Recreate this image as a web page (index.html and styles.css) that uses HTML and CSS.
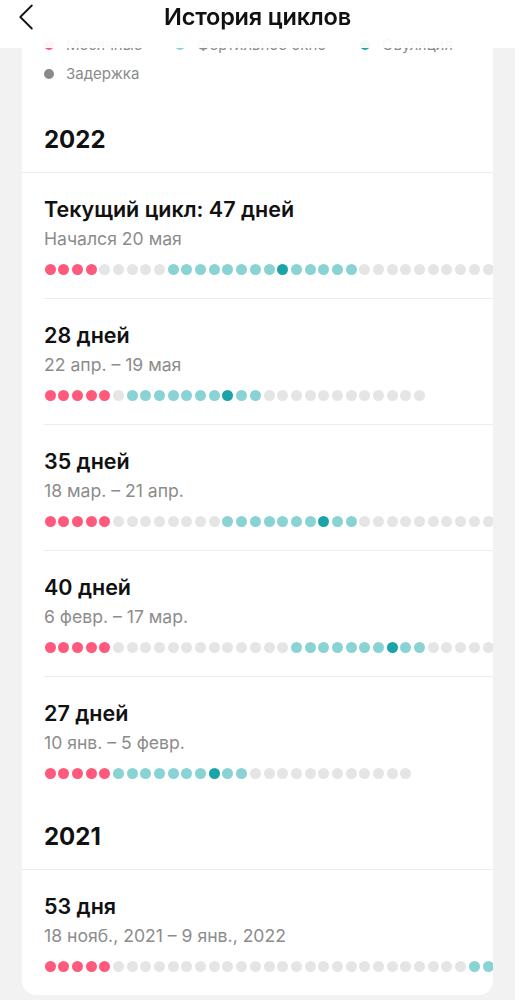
FILE: index.html
```html
<!DOCTYPE html>
<html>
<head lang="ru">
    <meta charset="UTF-8">
    <title>История циклов</title>
    <link rel="stylesheet" href="styles.css">
</head>
<body>
    <header class="topbar">
        <svg class="back" width="16" height="26" viewBox="0 0 16 26">
            <path d="M13.8 1.5 L2.3 13 L13.8 24.5" fill="none" stroke="#111" stroke-width="1.8" stroke-linecap="round" stroke-linejoin="round"/>
        </svg>
        <h1 class="title">История циклов</h1>
        <span></span>
    </header>

    <main class="page">
        <section class="card">
            <div class="legend">
                <div class="legend-row">
                    <span class="legend-item"><i class="mark period"></i>Месячные</span>
                    <span class="legend-item"><i class="mark fertile"></i>Фертильное окно</span>
                    <span class="legend-item"><i class="mark ovulation"></i>Овуляция</span>
                </div>
                <div class="legend-row">
                    <span class="legend-item"><i class="mark delay"></i>Задержка</span>
                </div>
            </div>

            <div class="group">
                <div class="year">2022</div>
                <div class="cycle">
                    <div class="cycle-title">Текущий цикл: 47 дней</div>
                    <div class="cycle-dates">Начался 20 мая</div>
                    <div class="dots" data-plan="4,5,8,1,5,24"></div>
                </div>
                <div class="cycle">
                    <div class="cycle-title">28 дней</div>
                    <div class="cycle-dates">22 апр. – 19 мая</div>
                    <div class="dots" data-plan="5,1,7,1,2,12"></div>
                </div>
                <div class="cycle">
                    <div class="cycle-title">35 дней</div>
                    <div class="cycle-dates">18 мар. – 21 апр.</div>
                    <div class="dots" data-plan="5,8,7,1,2,12"></div>
                </div>
                <div class="cycle">
                    <div class="cycle-title">40 дней</div>
                    <div class="cycle-dates">6 февр. – 17 мар.</div>
                    <div class="dots" data-plan="5,13,7,1,2,12"></div>
                </div>
                <div class="cycle">
                    <div class="cycle-title">27 дней</div>
                    <div class="cycle-dates">10 янв. – 5 февр.</div>
                    <div class="dots" data-plan="5,0,7,1,2,12"></div>
                </div>
            </div>

            <div class="group">
                <div class="year">2021</div>
                <div class="cycle">
                    <div class="cycle-title">53 дня</div>
                    <div class="cycle-dates">18 нояб., 2021 – 9 янв., 2022</div>
                    <div class="dots" data-plan="5,26,7,1,2,12"></div>
                </div>
            </div>
        </section>
    </main>

    <script>
        // plan: месячные, пусто, фертильное окно, овуляция, фертильное окно, пусто
        var kinds = ["period", "empty", "fertile", "ovulation", "fertile", "empty"];
        var rows = document.querySelectorAll('.dots');

        for (var i = 0; i < rows.length; i++) {
            var plan = rows[i].getAttribute('data-plan').split(',');
            for (var k = 0; k < plan.length; k++) {
                for (var n = 0; n < Number(plan[k]); n++) {
                    var dot = document.createElement('span');
                    dot.className = 'dot ' + kinds[k];
                    rows[i].appendChild(dot);
                }
            }
        }
    </script>
</body>
</html>
```

FILE: styles.css
```css
* {
    margin: 0;
    padding: 0;
    box-sizing: border-box;
}
body {
    background: #f2f2f2;
    font-family: "Inter", "Noto Sans", sans-serif;
    color: #111;
}

/* верхняя панель */
.topbar {
    position: fixed;
    top: 0;
    left: 0;
    right: 0;
    z-index: 10;
    height: 48px;
    display: grid;
    grid-template-columns: 1fr auto 1fr;
    align-items: start;
    background: rgba(255, 255, 255, 0.94);
}
.back {
    margin: 4px 0 0 18px;
}
.title {
    font-size: 23.5px;
    font-weight: 600;
    line-height: 34px;
    letter-spacing: -0.2px;
}

.page {
    padding: 0 22px 5px;
}
.card {
    background: #fff;
    border-radius: 0 0 14px 14px;
    overflow: hidden;
}

/* легенда */
.legend {
    padding: 30px 0 17px 22px;
}
.legend-row {
    display: grid;
    grid-template-columns: 131px 185px auto;
    height: 29px;
    align-items: center;
}
.legend-item {
    display: flex;
    align-items: center;
    gap: 12px;
    font-size: 15px;
    color: #8a8a8a;
}
.mark {
    width: 10px;
    height: 10px;
    border-radius: 50%;
}
.mark.period { background: #ff5a7b; }
.mark.fertile { background: #8ad3d4; }
.mark.ovulation { background: #1aa3a8; }
.mark.delay { background: #8a8a8a; }

/* год */
.year {
    padding: 20px 22px 17px;
    font-size: 24px;
    font-weight: 700;
    line-height: 30px;
    border-bottom: 1px solid #ececec;
}

/* циклы */
.cycle {
    margin-left: 22px;
    padding: 24px 0 0;
    height: 126px;
    border-bottom: 1px solid #ececec;
}
.cycle:last-child {
    border-bottom: none;
    height: 125px;
}
.cycle-title {
    font-size: 21.5px;
    font-weight: 600;
    line-height: 24px;
}
.cycle-dates {
    margin-top: 7px;
    font-size: 17.6px;
    line-height: 22px;
    color: #8c8c8c;
}
.dots {
    display: flex;
    gap: 2.7px;
    margin-top: 14px;
    margin-left: 0.5px;
}
.dot {
    flex-shrink: 0;
    width: 11px;
    height: 11px;
    border-radius: 50%;
}
.dot.period { background: #ff5a7b; }
.dot.empty { background: #e5e5e5; }
.dot.fertile { background: #8ad3d4; }
.dot.ovulation { background: #1aa3a8; }
```
